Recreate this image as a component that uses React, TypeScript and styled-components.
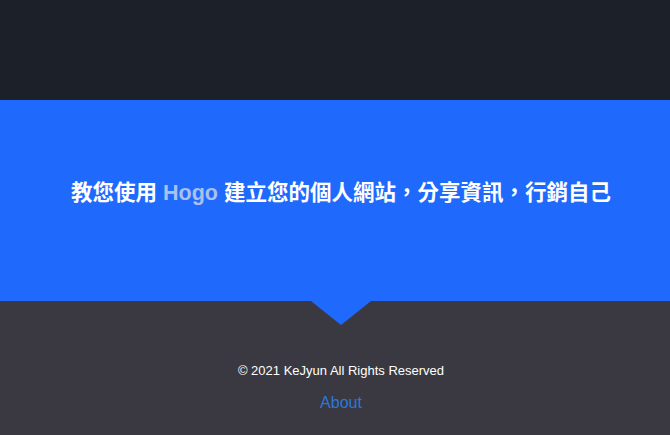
import styled, { createGlobalStyle } from "styled-components";

const GlobalStyle = createGlobalStyle`
  html, body {
    margin: 0;
    padding: 0;
    background: #3a3941;
    font-family: "Liberation Sans", "Noto Sans CJK TC", sans-serif;
  }
`;

const Page = styled.div`
  display: flex;
  flex-direction: column;
  min-height: 435px;
`;

const TopBar = styled.header`
  height: 100px;
  background-color: #1b2029;
`;

const Hero = styled.section`
  height: 201px;
  background-color: #1f6afd;
  display: flex;
  align-items: center;
  justify-content: center;
  padding-left: 12px;
  padding-bottom: 20px;
  box-sizing: border-box;
  position: relative;
`;

const Title = styled.h1`
  margin: 0;
  font-size: 21.5px;
  font-weight: 700;
  color: #ffffff;
`;

const Brand = styled.span`
  color: #a9c1ec;
`;

const Arrow = styled.div`
  position: absolute;
  left: 311px;
  bottom: -24px;
  width: 0;
  height: 0;
  border-left: 30px solid transparent;
  border-right: 30px solid transparent;
  border-top: 24px solid #1f6afd;
`;

const Footer = styled.footer`
  flex: 1;
  background-color: #3a3941;
  display: flex;
  flex-direction: column;
  align-items: center;
  padding-top: 62px;
  padding-left: 12px;
`;

const Copy = styled.p`
  margin: 0;
  font-size: 13px;
  color: #ffffff;
`;

const FooterLink = styled.a`
  margin-top: 16px;
  font-size: 16px;
  color: #2b78dc;
  text-decoration: none;
`;

function App() {
  return (
    <Page>
      <GlobalStyle />
      <TopBar />
      <Hero>
        <Title>
          教您使用 <Brand>Hogo</Brand> 建立您的個人網站，分享資訊，行銷自己
        </Title>
        <Arrow />
      </Hero>
      <Footer>
        <Copy>© 2021 KeJyun All Rights Reserved</Copy>
        <FooterLink href="#">About</FooterLink>
      </Footer>
    </Page>
  );
}

export default App;
